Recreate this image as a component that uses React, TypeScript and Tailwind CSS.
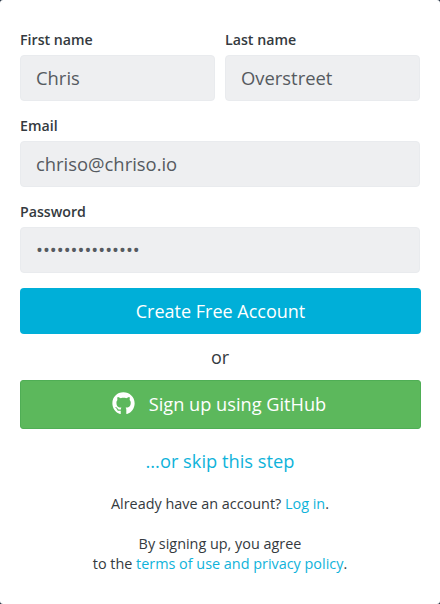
import { FaGithub } from "react-icons/fa";

const inputClass =
  "block w-full h-[46px] px-[15px] pb-[1px] rounded border border-[#e9ebee] bg-[#eeeff1] text-[18.4px] text-[#555a60] outline-none";

function Field({ label, value, type = "text" }: { label: string; value: string; type?: string }) {
  return (
    <label className="block flex-1">
      <span className="block mb-[5px] text-[14.2px] leading-5 font-semibold text-[#343a40]">{label}</span>
      <input className={inputClass} type={type} defaultValue={value} readOnly />
    </label>
  );
}

export default function App() {
  return (
    <div className="h-[604px] w-[440px] overflow-hidden bg-[#1f2d3d] font-['Open_Sans',sans-serif]">
      <div className="flex h-full flex-col rounded-[3px] bg-white px-5 pt-[30px]">
        <div className="flex gap-[10px]">
          <Field label="First name" value="Chris" />
          <Field label="Last name" value="Overstreet" />
        </div>
        <div className="mt-[15px]">
          <Field label="Email" value="chriso@chriso.io" />
        </div>
        <div className="mt-[15px]">
          <Field label="Password" value="chrisoverstreet" type="password" />
        </div>

        <button className="mt-[15px] h-[46px] w-[401px] rounded bg-[#00afd8] text-lg text-white">
          Create Free Account
        </button>
        <p className="mt-[11px] text-center text-lg leading-[25px] text-[#343a40]">or</p>
        <button className="mt-[10px] flex h-[49px] w-[401px] items-center justify-center gap-[14px] rounded-[3px] border border-[#4fae55] bg-[#5cb85c] pr-[3px] text-[18.2px] text-white">
          <FaGithub className="-mt-[2px] h-[23px] w-[23px]" />
          Sign up using GitHub
        </button>

        <a className="mt-[19px] block text-center text-[18.3px] leading-[25px] text-[#0fb3da]" href="#">
          ...or skip this step
        </a>
        <p className="mt-[21px] text-center text-[14.4px] leading-5 text-[#343a40]">
          Already have an account? <a className="text-[#0fb3da]" href="#">Log in</a>.
        </p>
        <p className="mt-5 text-center text-[14.4px] leading-5 text-[#343a40]">
          By signing up, you agree
          <br />
          to the <a className="text-[#0fb3da]" href="#">terms of use and privacy policy</a>.
        </p>
      </div>
    </div>
  );
}
